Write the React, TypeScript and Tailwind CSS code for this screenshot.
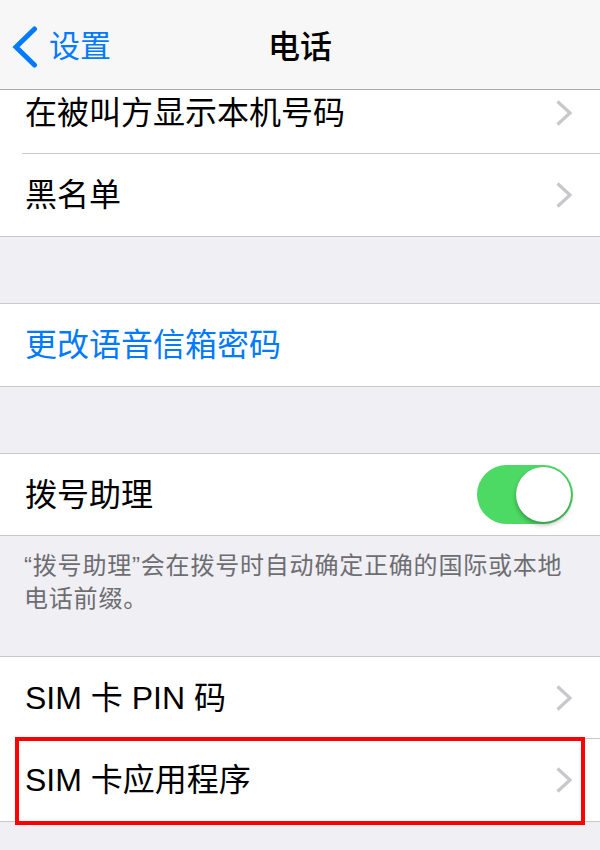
import React from "react";

const FONT = "font-['Liberation_Sans','Noto_Sans_CJK_SC',sans-serif]";

function Chevron() {
  return (
    <svg width="18" height="28" viewBox="0 0 18 28" fill="none">
      <polyline
        points="2.5,2.5 15,14 2.5,25.5"
        stroke="#c7c7cc"
        strokeWidth="3.2"
        strokeLinecap="butt"
        strokeLinejoin="miter"
      />
    </svg>
  );
}

function Toggle() {
  return (
    <div className="flex h-[59px] w-[96px] items-center justify-end rounded-full bg-[#4cd964] p-[2px]">
      <div className="h-[55px] w-[55px] rounded-full bg-white shadow-[0_3px_4px_rgba(0,0,0,0.28),0_0_1px_rgba(0,0,0,0.2)]" />
    </div>
  );
}

export default function App() {
  return (
    <div className={`min-h-[850px] w-[600px] overflow-hidden bg-[#efeff4] ${FONT}`}>
      {/* Navigation bar */}
      <div className="grid h-[90px] grid-cols-[1fr_auto_1fr] items-center border-b border-[#a9a9ad] bg-[#f7f7f7] pt-[5px]">
        <div className="flex items-center gap-[11px] pl-[12px]">
          <svg width="26" height="42" viewBox="0 0 26 42" fill="none">
            <polyline
              points="22.5,3 4,21 22.5,39"
              stroke="#007aff"
              strokeWidth="5"
              strokeLinecap="round"
              strokeLinejoin="miter"
            />
          </svg>
          <span className="text-[31px] leading-[38px] text-[#007aff]">设置</span>
        </div>
        <div className="text-[32px] font-medium leading-[38px] text-black">电话</div>
        <div />
      </div>

      {/* Section 1 */}
      <div className="border-b border-[#c8c7cc] bg-white">
        <div className="ml-[22px] flex h-[64px] items-center justify-between border-b border-[#c8c7cc] pb-[17px] pl-[3px] pr-[27px]">
          <span className="text-[32px] leading-[38px] text-black">在被叫方显示本机号码</span>
          <Chevron />
        </div>
        <div className="flex h-[82px] items-center justify-between pl-[25px] pr-[27px]">
          <span className="text-[32px] leading-[38px] text-black">黑名单</span>
          <Chevron />
        </div>
      </div>

      <div className="h-[66px]" />

      {/* Section 2 */}
      <div className="border-y border-[#c8c7cc] bg-white">
        <div className="flex h-[82px] items-center pl-[25px] pr-[27px]">
          <span className="text-[32px] leading-[38px] text-[#007aff]">更改语音信箱密码</span>
        </div>
      </div>

      <div className="h-[66px]" />

      {/* Section 3 */}
      <div className="border-y border-[#c8c7cc] bg-white">
        <div className="flex h-[81px] items-center justify-between pl-[25px] pr-[27px]">
          <span className="text-[32px] leading-[38px] text-black">拨号助理</span>
          <Toggle />
        </div>
      </div>

      <div className="h-[120px] pl-[24px] pr-[10px] pt-[13px] text-[24px] leading-[33px] tracking-[0.8px] text-[#6d6d72]">
        “拨号助理”会在拨号时自动确定正确的国际或本地
        <br />
        电话前缀。
      </div>

      {/* Section 4 */}
      <div className="border-y border-[#c8c7cc] bg-white">
        <div className="ml-[22px] flex h-[82px] items-center justify-between border-b border-[#c8c7cc] pl-[3px] pr-[27px]">
          <span className="text-[32px] leading-[38px] text-black">SIM 卡 PIN 码</span>
          <Chevron />
        </div>
        <div className="relative flex h-[82px] items-center justify-between pl-[25px] pr-[27px]">
          <span className="text-[32px] leading-[38px] text-black">SIM 卡应用程序</span>
          <Chevron />
          <div className="pointer-events-none absolute bottom-[-4px] left-[15px] right-[15px] top-[-2px] border-[4px] border-[#ff0000]" />
        </div>
      </div>
    </div>
  );
}
